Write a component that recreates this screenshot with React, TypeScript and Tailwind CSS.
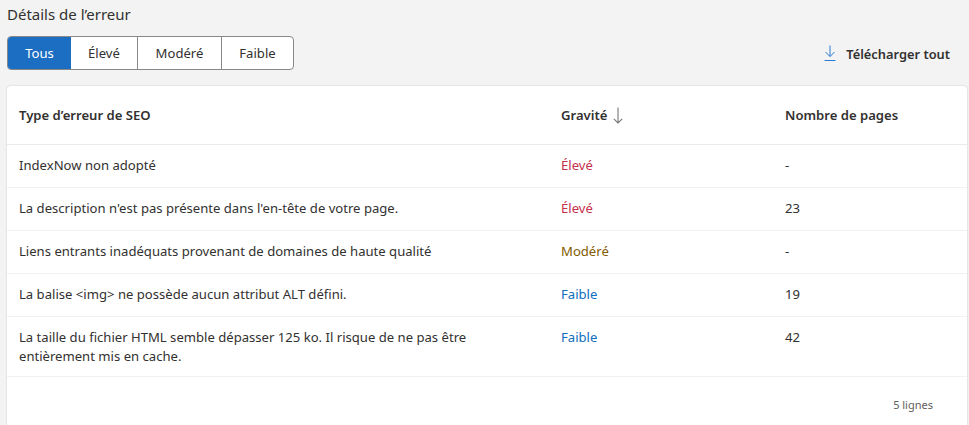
const filters = ["Tous", "Élevé", "Modéré", "Faible"];

const rows = [
  { name: "IndexNow non adopté", severity: "Élevé", color: "text-[#c4314b]", pages: "-" },
  { name: "La description n'est pas présente dans l'en-tête de votre page.", severity: "Élevé", color: "text-[#c4314b]", pages: "23" },
  { name: "Liens entrants inadéquats provenant de domaines de haute qualité", severity: "Modéré", color: "text-[#835b00]", pages: "-" },
  { name: "La balise <img> ne possède aucun attribut ALT défini.", severity: "Faible", color: "text-[#106ebe]", pages: "19" },
  { name: "La taille du fichier HTML semble dépasser 125 ko. Il risque de ne pas être entièrement mis en cache.", severity: "Faible", color: "text-[#106ebe]", pages: "42" },
];

const App = () => {
  return (
    <div className="h-[425px] w-[969px] overflow-hidden bg-[#f3f3f3] pl-[7px] pr-[2px] font-['Noto_Sans','Open_Sans',sans-serif] text-[13.1px] text-[#323130]">
      <div className="pt-[4px] text-[15px] leading-5">Détails de l’erreur</div>
      <div className="mt-3 flex items-center justify-between">
        <div className="flex h-[34px] overflow-hidden rounded border border-[#8a8886] bg-white">
          {filters.map((label, index) => (
            <div
              key={label}
              className={
                index === 0
                  ? "flex w-[63px] items-center justify-center bg-[#1b6ec2] pt-[2px] text-white"
                  : index === 1
                    ? "flex w-[66px] items-center justify-center pt-[2px]"
                    : index === 2
                      ? "flex w-[84px] items-center justify-center border-l border-[#8a8886] pt-[2px]"
                      : "flex w-[72px] items-center justify-center border-l border-[#8a8886] pt-[2px]"
              }
            >
              {label}
            </div>
          ))}
        </div>
        <div className="mr-[17px] flex items-center gap-[10px] text-[12.85px] font-semibold">
          <svg width="12" height="16" viewBox="0 0 12 16" fill="none" stroke="#2b7cd3" strokeWidth="1">
            <path d="M6 0.5V11.5M1.5 7L6 11.5L10.5 7M0.5 15.5H11.5" />
          </svg>
          <span className="pt-[4px]">Télécharger tout</span>
        </div>
      </div>
      <div className="mt-4 h-[400px] rounded-t bg-white shadow-[0_0_2px_rgba(0,0,0,0.2)]">
        <div className="grid h-[59px] grid-cols-[542px_224px_1fr] items-center border-b border-[#edebe9] pl-3 pt-[2px] font-semibold">
          <div>Type d’erreur de SEO</div>
          <div className="flex items-center gap-[6px]">
            Gravité
            <svg width="10" height="17" viewBox="0 0 10 17" fill="none" stroke="#7a7876" strokeWidth="1.1">
              <path d="M5 0.5V16M0.8 11.8L5 16L9.2 11.8" />
            </svg>
          </div>
          <div>Nombre de pages</div>
        </div>
        {rows.map((row, index) => (
          <div
            key={row.name}
            className={
              index === rows.length - 1
                ? "grid grid-cols-[542px_224px_1fr] border-b border-[#f3f2f1] pt-[11px] pb-[10px] pl-3 leading-[19px]"
                : "grid grid-cols-[542px_224px_1fr] border-b border-[#f3f2f1] pt-[11px] pb-[12px] pl-3 leading-[19px]"
            }
          >
            <div className="w-[470px]">{row.name}</div>
            <div className={row.color}>{row.severity}</div>
            <div>{row.pages}</div>
          </div>
        ))}
        <div className="pt-[20px] pr-[34px] text-right text-[11px] text-[#605e5c]">5 lignes</div>
      </div>
    </div>
  );
};

export default App;
